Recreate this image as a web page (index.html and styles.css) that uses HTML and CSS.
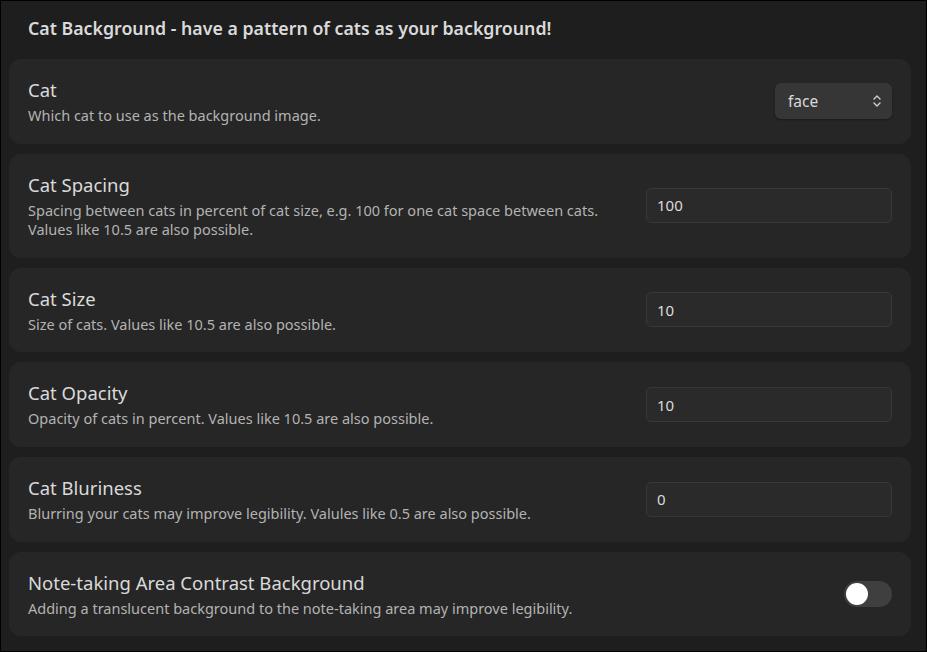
FILE: index.html
```html
<!DOCTYPE html>
<html lang="en">
<head>
    <meta charset="UTF-8">
    <meta name="viewport" content="width=device-width, initial-scale=1.0">
    <title>Cat Background Settings</title>
    <link rel="stylesheet" href="styles.css">
</head>
<body>
    <div class="settings">
        <h2 class="settings-title">Cat Background - have a pattern of cats as your background!</h2>

        <div class="setting-item">
            <div class="setting-info">
                <div class="setting-name">Cat</div>
                <div class="setting-desc">Which cat to use as the background image.</div>
            </div>
            <div class="setting-control">
                <div class="dropdown">
                    <span>face</span>
                    <svg class="dropdown-arrows" width="10" height="14" viewBox="0 0 10 14">
                        <path d="M2 5 L5 2 L8 5 M2 9 L5 12 L8 9" fill="none" stroke="#cfcfcf" stroke-width="1.4" stroke-linecap="round" stroke-linejoin="round"/>
                    </svg>
                </div>
            </div>
        </div>

        <div class="setting-item">
            <div class="setting-info">
                <div class="setting-name">Cat Spacing</div>
                <div class="setting-desc">Spacing between cats in percent of cat size, e.g. 100 for one cat space between cats.<br>Values like 10.5 are also possible.</div>
            </div>
            <div class="setting-control">
                <input class="text-input" type="text" value="100">
            </div>
        </div>

        <div class="setting-item">
            <div class="setting-info">
                <div class="setting-name">Cat Size</div>
                <div class="setting-desc">Size of cats. Values like 10.5 are also possible.</div>
            </div>
            <div class="setting-control">
                <input class="text-input" type="text" value="10">
            </div>
        </div>

        <div class="setting-item">
            <div class="setting-info">
                <div class="setting-name">Cat Opacity</div>
                <div class="setting-desc">Opacity of cats in percent. Values like 10.5 are also possible.</div>
            </div>
            <div class="setting-control">
                <input class="text-input" type="text" value="10">
            </div>
        </div>

        <div class="setting-item">
            <div class="setting-info">
                <div class="setting-name">Cat Bluriness</div>
                <div class="setting-desc">Blurring your cats may improve legibility. Valules like 0.5 are also possible.</div>
            </div>
            <div class="setting-control">
                <input class="text-input" type="text" value="0">
            </div>
        </div>

        <div class="setting-item">
            <div class="setting-info">
                <div class="setting-name">Note-taking Area Contrast Background</div>
                <div class="setting-desc">Adding a translucent background to the note-taking area may improve legibility.</div>
            </div>
            <div class="setting-control">
                <div class="toggle"><div class="toggle-knob"></div></div>
            </div>
        </div>
    </div>
</body>
</html>
```

FILE: styles.css
```css
* {
    margin: 0;
    padding: 0;
    box-sizing: border-box;
}

html, body {
    height: 100%;
}

body {
    font-family: 'Noto Sans', 'Open Sans', sans-serif;
    background: #1e1e1e;
    color: #dadada;
    border: 1px solid #000;
    overflow: hidden;
}

.settings {
    padding: 15px 15px 0 8px;
    display: flex;
    flex-direction: column;
    gap: 10px;
}

.settings-title {
    font-size: 17.75px;
    font-weight: 600;
    line-height: 25px;
    padding-left: 19px;
    margin-bottom: 8px;
    color: #dadada;
}

.setting-item {
    background: #262626;
    border-radius: 12px;
    padding: 18px 19px 18.4px 19px;
    display: flex;
    align-items: center;
    gap: 20px;
}

.setting-info {
    flex: 1;
    display: flex;
    flex-direction: column;
    gap: 4px;
}

.setting-name {
    font-size: 18.5px;
    line-height: 25px;
    color: #dadada;
}

.setting-desc {
    font-size: 14.5px;
    line-height: 19.3px;
    color: #b3b3b3;
}

.setting-control {
    display: flex;
    align-items: center;
}

.dropdown {
    width: 117px;
    height: 36px;
    background: #363636;
    border-radius: 6px;
    box-shadow: 0 1px 2px rgba(0,0,0,0.35);
    display: flex;
    align-items: center;
    justify-content: space-between;
    padding: 0 10px 0 13px;
    font-size: 15.5px;
    color: #dadada;
}

.text-input {
    width: 246px;
    height: 35px;
    background: #2a2a2a;
    border: 1px solid #383838;
    border-radius: 5px;
    padding: 0 10px;
    font-family: inherit;
    font-size: 15px;
    color: #dadada;
    outline: none;
}

.toggle {
    width: 48px;
    height: 26px;
    border-radius: 13px;
    background: #3f3f3f;
    padding: 2px;
}

.toggle-knob {
    width: 22px;
    height: 22px;
    border-radius: 50%;
    background: #fff;
}
```
